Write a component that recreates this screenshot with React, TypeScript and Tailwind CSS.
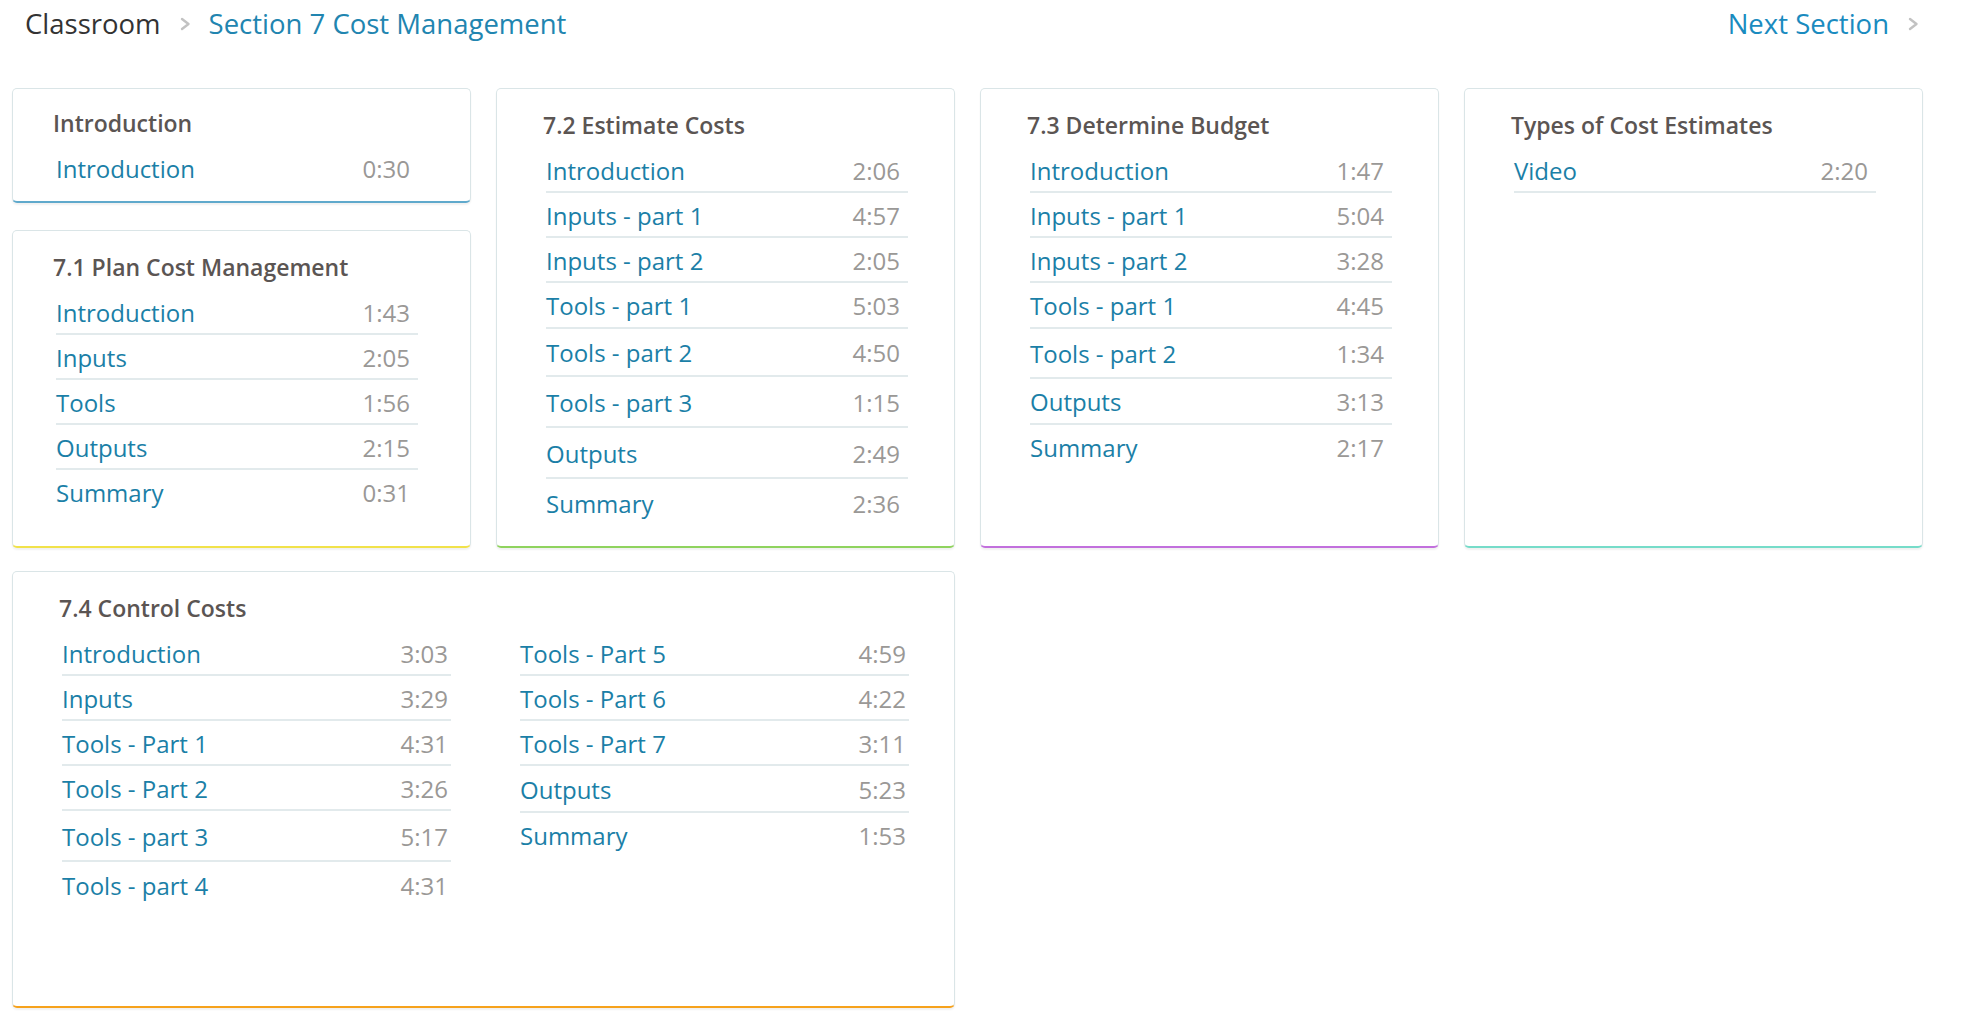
import React from 'react';

type Item = { t: string; d: string; x?: number };

type Section = {
  title: string;
  accent: string;
  items: Item[];
  lastLine?: boolean;
};

const intro: Section = {
  title: "Introduction",
  accent: "border-b-[#5fa9cc]",
  items: [{ t: "Introduction", d: "0:30" }],
};

const planCost: Section = {
  title: "7.1 Plan Cost Management",
  accent: "border-b-[#f1e24a]",
  items: [
    { t: "Introduction", d: "1:43" },
    { t: "Inputs", d: "2:05" },
    { t: "Tools", d: "1:56" },
    { t: "Outputs", d: "2:15" },
    { t: "Summary", d: "0:31" },
  ],
};

const estimate: Section = {
  title: "7.2 Estimate Costs",
  accent: "border-b-[#8fd35e]",
  items: [
    { t: "Introduction", d: "2:06" },
    { t: "Inputs - part 1", d: "4:57" },
    { t: "Inputs - part 2", d: "2:05" },
    { t: "Tools - part 1", d: "5:03", x: 1 },
    { t: "Tools - part 2", d: "4:50", x: 3 },
    { t: "Tools - part 3", d: "1:15", x: 6 },
    { t: "Outputs", d: "2:49", x: 6 },
    { t: "Summary", d: "2:36", x: 4 },
  ],
};

const budget: Section = {
  title: "7.3 Determine Budget",
  accent: "border-b-[#c270dd]",
  items: [
    { t: "Introduction", d: "1:47" },
    { t: "Inputs - part 1", d: "5:04" },
    { t: "Inputs - part 2", d: "3:28" },
    { t: "Tools - part 1", d: "4:45", x: 1 },
    { t: "Tools - part 2", d: "1:34", x: 5 },
    { t: "Outputs", d: "3:13", x: 1 },
    { t: "Summary", d: "2:17" },
  ],
};

const types: Section = {
  title: "Types of Cost Estimates",
  accent: "border-b-[#76dcc9]",
  items: [{ t: "Video", d: "2:20" }],
  lastLine: true,
};

const controlLeft: Item[] = [
  { t: "Introduction", d: "3:03" },
  { t: "Inputs", d: "3:29" },
  { t: "Tools - Part 1", d: "4:31" },
  { t: "Tools - Part 2", d: "3:26" },
  { t: "Tools - part 3", d: "5:17", x: 6 },
  { t: "Tools - part 4", d: "4:31", x: 2 },
];

const controlRight: Item[] = [
  { t: "Tools - Part 5", d: "4:59" },
  { t: "Tools - Part 6", d: "4:22" },
  { t: "Tools - Part 7", d: "3:11" },
  { t: "Outputs", d: "5:23", x: 2 },
  { t: "Summary", d: "1:53" },
];

const Chevron = () => (
  <svg width="12" height="14" viewBox="0 0 12 14" fill="none" className="shrink-0">
    <polyline points="3,2 9.5,7 3,12" stroke="#c2c2c2" strokeWidth="2.4" strokeLinecap="round" strokeLinejoin="round" />
  </svg>
);

const Row = ({ item, line, tight }: { item: Item; line: boolean; tight?: boolean }) => {
  const extra = item.x ?? 0;
  const top = Math.floor(extra / 2);
  return (
    <li
      className={`flex items-baseline justify-between text-[24px] leading-[28px] ${line ? 'border-b-2 border-[#e2eaec]' : ''}`}
      style={{ paddingTop: 9 + top, paddingBottom: 6 + (extra - top) }}
    >
      <a className="text-[#1b7fa7] cursor-pointer">{item.t}</a>
      <span className={`text-[#9a9896] ${tight ? 'pr-[3px]' : 'pr-[8px]'}`}>{item.d}</span>
    </li>
  );
};

const RowList = ({ items, lastLine, tight }: { items: Item[]; lastLine?: boolean; tight?: boolean }) => (
  <ul className="ml-[3px]">
    {items.map((it, i) => (
      <Row key={it.t + i} item={it} tight={tight} line={i < items.length - 1 || !!lastLine} />
    ))}
  </ul>
);

const Card = ({
  section,
  narrow,
  className = '',
}: {
  section: Section;
  narrow?: boolean;
  className?: string;
}) => (
  <div
    className={`bg-white rounded-[5px] border border-[#dae5e7] border-b-2 ${section.accent} shadow-[0_2px_2px_rgba(0,0,0,0.06)] pt-[22px] ${
      narrow ? 'pl-[40px] pr-[52px]' : 'pl-[46px] pr-[46px]'
    } ${className}`}
  >
    <h3 className="text-[23px] leading-[28px] font-semibold text-[#5b5553] mb-[9px]">{section.title}</h3>
    <RowList items={section.items} lastLine={section.lastLine} />
  </div>
);

export default function App() {
  return (
    <div className="min-h-screen bg-white" style={{ fontFamily: '"Open Sans", "Noto Sans", sans-serif' }}>
      <header className="flex items-center justify-between pl-[25px] pr-[47px] pt-[8px] pb-[48px] text-[27.5px] leading-[32px]">
        <nav className="flex items-center gap-[18px]">
          <span className="text-[#333333]">Classroom</span>
          <Chevron />
          <a className="text-[#2185b0] cursor-pointer">Section 7 Cost Management</a>
        </nav>
        <a className="flex items-center gap-[18px] text-[#1a8bbf] cursor-pointer">
          Next Section
          <Chevron />
        </a>
      </header>

      <main className="ml-[12px] w-[1911px] grid grid-cols-4 gap-x-[25px] gap-y-[23px]">
        <div className="flex flex-col gap-[27px]">
          <Card section={intro} narrow className="h-[115px] !pt-[20px]" />
          <Card section={planCost} narrow className="flex-1" />
        </div>
        <Card section={estimate} className="h-[460px]" />
        <Card section={budget} />
        <Card section={types} />

        <div className="col-span-2 h-[437px] bg-white rounded-[5px] border border-[#dae5e7] border-b-2 border-b-[#f6a21c] shadow-[0_2px_2px_rgba(0,0,0,0.06)] pt-[22px] pl-[46px] pr-[45px]">
          <h3 className="text-[23px] leading-[28px] font-semibold text-[#5b5553] mb-[9px]">7.4 Control Costs</h3>
          <div className="grid grid-cols-2 gap-x-[66px]">
            <RowList items={controlLeft} tight />
            <RowList items={controlRight} tight />
          </div>
        </div>
      </main>
    </div>
  );
}
